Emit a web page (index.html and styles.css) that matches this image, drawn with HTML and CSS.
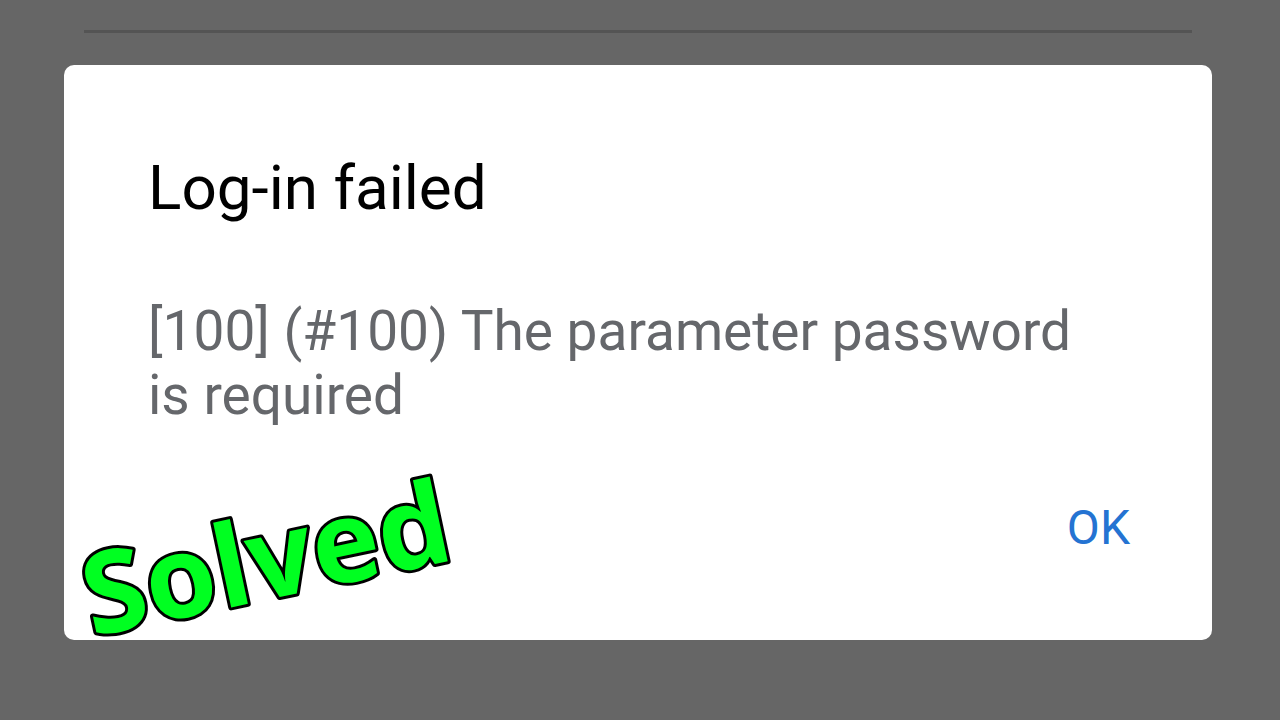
FILE: index.html
```html
<!DOCTYPE html>
<html lang="en">
<head>
<meta charset="utf-8">
<title>Log-in failed</title>
<link rel="stylesheet" href="styles.css">
</head>
<body>
<main class="screen">
  <hr class="rule">
  <section class="dialog" role="alertdialog" aria-labelledby="title" aria-describedby="message">
    <h1 class="title" id="title">Log-in failed</h1>
    <p class="message" id="message">[100] (#100) The parameter password is required</p>
    <div class="actions"><button class="ok" type="button">OK</button></div>
    <svg class="stamp" viewBox="0 0 400 190" role="img" aria-label="Solved">
      <text class="stamp-text" x="20" y="177" transform="rotate(-12 20 177)">Solved</text>
    </svg>
  </section>
</main>
</body>
</html>
```
FILE: styles.css
```css
* { box-sizing: border-box; }
body { margin: 0; background: #666; font-family: Roboto, "Liberation Sans", sans-serif; }
.screen { min-height: 100vh; padding: 30px 5% 80px; }
.rule { height: 3px; margin: 0 24px 32px 20px; border: 0; background: #545454; }
.dialog { position: relative; margin-right: 4px; padding: 88px 72px 80px 84px; border-radius: 10px; background: #fff; }
.title { margin: 0; font-size: 62px; line-height: 70px; font-weight: 400; color: #000; }
.message { margin: 76px 0 0; padding-right: 40px; font-size: 55px; line-height: 64px; font-weight: 400; color: #65676b; }
.actions { display: flex; justify-content: flex-end; margin-top: 69px; }
.ok { padding: 4px 10px; border: 0; background: none; font: 400 48px/56px Roboto, sans-serif; color: #2473d2; cursor: pointer; }
.stamp { position: absolute; left: 8px; bottom: -10px; width: 400px; overflow: visible; }
.stamp-text { font: 700 114px "Open Sans", "Noto Sans", sans-serif; fill: #00ff21; stroke: #000; stroke-width: 6px; stroke-linejoin: round; paint-order: stroke; }
```
